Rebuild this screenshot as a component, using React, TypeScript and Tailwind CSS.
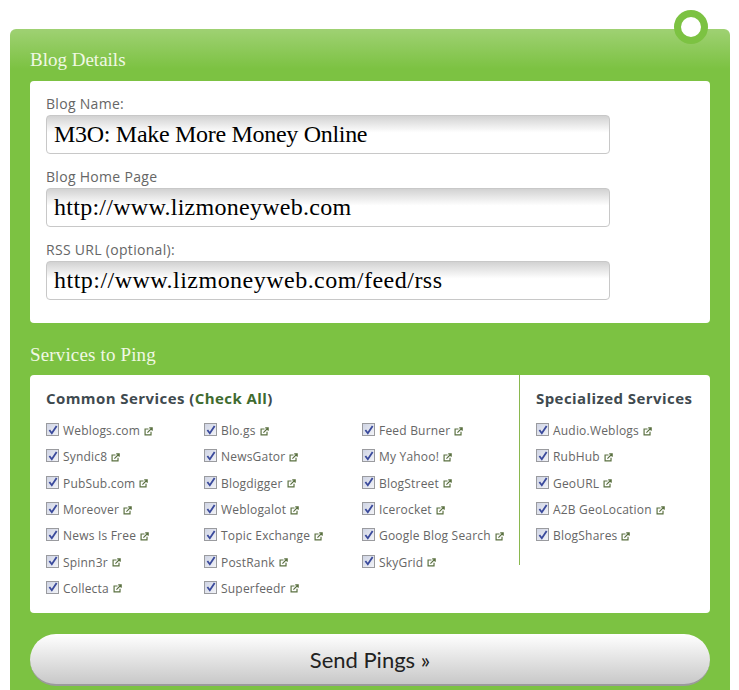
import React from "react";

const common = [
  ["Weblogs.com", "Blo.gs", "Feed Burner"],
  ["Syndic8", "NewsGator", "My Yahoo!"],
  ["PubSub.com", "Blogdigger", "BlogStreet"],
  ["Moreover", "Weblogalot", "Icerocket"],
  ["News Is Free", "Topic Exchange", "Google Blog Search"],
  ["Spinn3r", "PostRank", "SkyGrid"],
  ["Collecta", "Superfeedr", ""],
];

const special = ["Audio.Weblogs", "RubHub", "GeoURL", "A2B GeoLocation", "BlogShares"];

const sans = "font-['Open_Sans',sans-serif]";
const serif = "font-['Liberation_Serif',serif]";

function Box() {
  return (
    <span className="-mt-[3px] mr-px flex h-[13px] w-[13px] shrink-0 items-center justify-center border border-[#9a9b9f] bg-gradient-to-br from-[#cfd4e4] to-[#f2f3f7]">
      <svg width="10" height="10" viewBox="0 0 11 11" fill="none">
        <path d="M1.5 5.5 L4.2 9 L9.5 1.2" stroke="#3a4a9c" strokeWidth="2" />
      </svg>
    </span>
  );
}

function LinkIcon() {
  return (
    <svg width="9" height="9" viewBox="0 0 10 10" fill="none" className="ml-[4px] shrink-0" stroke="#5a7040" strokeWidth="1.3">
      <path d="M5 2.2H1.2V8.8H7.8V5.2" />
      <path d="M3.8 6.2 L8.6 1.4 M5.8 0.9H9.1V4.2" />
    </svg>
  );
}

function Service({ name }: { name: string }) {
  return (
    <div className="flex h-[26.3px] items-center pt-[2px]">
      <Box />
      <span className={`${sans} ml-[3px] text-[12px] leading-none tracking-[0.2px] text-[#666]`}>{name}</span>
      <LinkIcon />
    </div>
  );
}

function Field({ label, value, spacing }: { label: string; value: string; spacing: string }) {
  return (
    <div className="mb-[15px]">
      <div className={`${sans} h-[19px] text-[14px] leading-[16px] tracking-[0.3px] text-[#666]`}>{label}</div>
      <div className={`${serif} ${spacing} flex h-[39px] w-[564px] items-center rounded-[4px] border border-[#c8c8c8] bg-[linear-gradient(#d2d2d2,#ffffff_45%)] pb-[2px] pl-[7px] text-[24px] text-black`}>
        {value}
      </div>
    </div>
  );
}

export default function App() {
  return (
    <div className="h-[690px] w-[739px] overflow-hidden bg-white pl-[10px] pt-[29px]">
      <div className="relative h-[661px] w-[720px] rounded-t-[6px] bg-[#7cc242] bg-[linear-gradient(#9fd173,#7cc242_40px)] bg-no-repeat px-[20px]">
        <div className="absolute -top-[19px] left-[664px] h-[34px] w-[34px] rounded-full border-[7px] border-[#7cc242] bg-white" />

        <h2 className={`${serif} h-[52px] pt-[19px] text-[19px] leading-[24px] text-[#f0f8e4]`}>Blog Details</h2>
        <div className="h-[242px] rounded-[4px] bg-white pl-[16px] pt-[15px]">
          <Field label="Blog Name:" value="M3O: Make More Money Online" spacing="tracking-[-0.3px]" />
          <Field label="Blog Home Page" value="http://www.lizmoneyweb.com" spacing="tracking-[0.27px]" />
          <Field label="RSS URL (optional):" value="http://www.lizmoneyweb.com/feed/rss" spacing="tracking-[0.48px]" />
        </div>

        <h2 className={`${serif} h-[52px] pt-[20px] text-[19px] leading-[24px] tracking-[0.15px] text-[#f0f8e4]`}>Services to Ping</h2>
        <div className="flex h-[238px] rounded-[4px] bg-white">
          <div className="h-[190px] w-[490px] border-r border-[#8ab84f] pl-[16px] pt-[13px]">
            <h3 className={`${sans} h-[29px] text-[15px] font-bold leading-[20px] tracking-[0.43px] text-[#3f4a4f]`}>
              Common Services (<span className="text-[#3f6b2f]">Check All</span>)
            </h3>
            <div className="grid grid-cols-[158px_158px_158px]">
              {common.flat().map((name, i) => (name ? <Service key={i} name={name} /> : <div key={i} />))}
            </div>
          </div>
          <div className="pl-[16px] pt-[13px]">
            <h3 className={`${sans} h-[29px] text-[15px] font-bold leading-[20px] tracking-[0.43px] text-[#3f4a4f]`}>Specialized Services</h3>
            {special.map((name) => (
              <Service key={name} name={name} />
            ))}
          </div>
        </div>

        <button className="mt-[21px] flex h-[52px] w-[680px] items-center justify-center rounded-[26px] border-b-2 border-[#9a9a9a] bg-[linear-gradient(#ffffff,#c8c8c8)] font-['Lato',sans-serif] text-[22px] text-[#222]">
          Send Pings »
        </button>
      </div>
    </div>
  );
}
